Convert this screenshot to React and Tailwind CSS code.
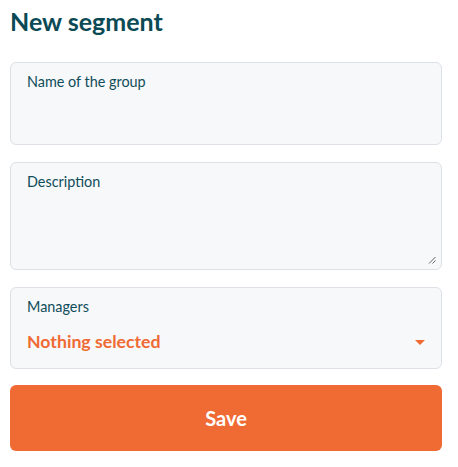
export default function App() {
  return (
    <div className="w-[458px] h-[467px] bg-white" style={{ fontFamily: "Lato, 'Open Sans', sans-serif" }}>
      <div className="ml-[10px] w-[432px] pt-[5px] flex flex-col">
        <h2 className="text-[25px] leading-[32px] font-bold text-[#0b4a55]">New segment</h2>
        <div className="mt-[25px] h-[83px] rounded-[6px] border border-[#dde1e6] bg-[#f6f8fa] pt-[9px] px-[16px]">
          <div className="text-[14.4px] leading-[20px] text-[#114d59]">Name of the group</div>
        </div>
        <div className="mt-[17px] h-[108px] rounded-[6px] border border-[#dde1e6] bg-[#f6f8fa] pt-[9px] px-[16px] pb-[5px] pr-[5px] flex flex-col">
          <div className="text-[14.4px] leading-[20px] text-[#114d59]">Description</div>
          <div className="flex-1" />
          <div className="flex justify-end">
            <svg width="8" height="8" viewBox="0 0 8 8">
              <line x1="1" y1="7.5" x2="7.5" y2="1" stroke="#555" strokeWidth="0.9" />
              <line x1="4.5" y1="7.5" x2="7.5" y2="4.5" stroke="#555" strokeWidth="0.9" />
            </svg>
          </div>
        </div>
        <div className="mt-[17px] h-[82px] rounded-[6px] border border-[#dde1e6] bg-[#f6f8fa] pt-[9px] pl-[16px] pr-[16px]">
          <div className="text-[14.4px] leading-[20px] text-[#114d59]">Managers</div>
          <div className="mt-[13px] flex items-center justify-between">
            <span className="text-[17.7px] leading-[24px] font-bold text-[#f06a33]">Nothing selected</span>
            <svg width="10" height="5" viewBox="0 0 10 5">
              <polygon points="0,0 10,0 5,5" fill="#f06a33" />
            </svg>
          </div>
        </div>
        <button className="mt-[16px] h-[66px] rounded-[6px] bg-[#f06a33] text-white text-[20px] font-bold flex items-center justify-center">
          Save
        </button>
      </div>
    </div>
  );
}
